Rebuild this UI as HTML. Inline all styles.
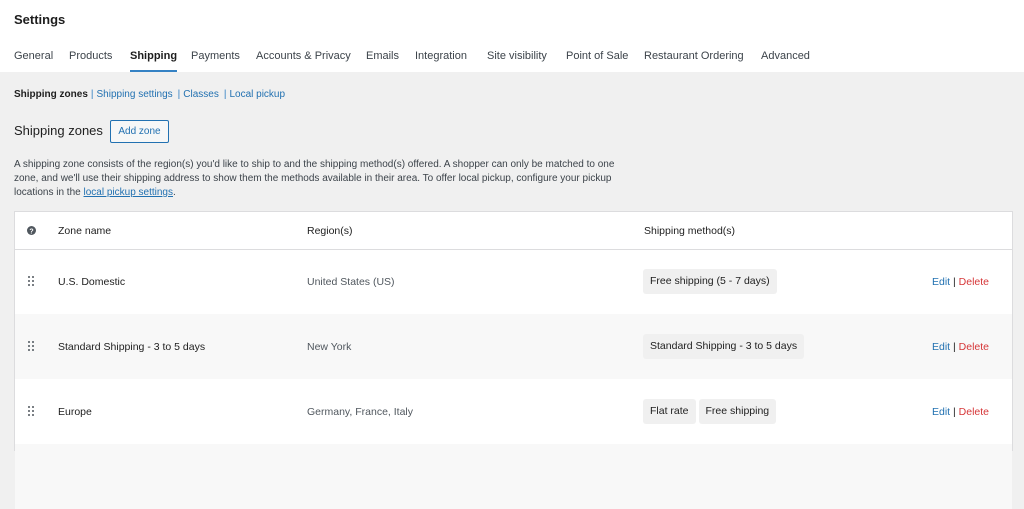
<!DOCTYPE html>
<html><head><style>
html,body{margin:0;width:1024px;height:448px;overflow:hidden}
body{background:#f0f0f0;font-family:"Liberation Sans",sans-serif;color:#1e1e1e;}
.hdr{background:#fff;height:72px;position:relative}
.title{position:absolute;left:14px;top:12px;font-size:13px;font-weight:bold;color:#1e1e1e}
.tabs{position:absolute;left:0;top:50px;font-size:11px;color:#3c434a;white-space:nowrap}
.tabs span{position:absolute;top:0}
.tabs .on{color:#1e1e1e;font-weight:bold}
.tabs .on:after{content:"";position:absolute;left:0;right:0;top:20px;height:2px;background:#3582c4}
.sub{position:absolute;left:14px;top:89px;font-size:10px;color:#2271b1;white-space:nowrap}
.sub b{color:#1e1e1e}
.sub i{font-style:normal;color:#3582c4;margin:0 3px}
h2{position:absolute;left:14px;top:123px;margin:0;font-size:13px;font-weight:normal;color:#1e1e1e}
.btn{position:absolute;left:110px;top:120px;width:57px;height:21px;border:1px solid #2271b1;border-radius:2px;background:#f6f7f7;color:#2271b1;font-size:10px;line-height:21px;text-align:center}
.desc{position:absolute;left:14px;top:158px;font-size:10px;line-height:14px;color:#3c434a;width:615px}
.desc a{color:#2271b1;text-decoration:underline}
.tbl{position:absolute;left:14px;top:211px;width:999px;height:240px;background:#fff;border:1px solid #dcdcde;box-sizing:border-box}
.th{position:absolute;top:0;left:0;right:0;height:37px;border-bottom:1px solid #dcdcde;font-size:10.5px;color:#1e1e1e}
.row{position:absolute;left:0;right:0;height:65px;font-size:10.5px}
.row.g{background:#f8f8f8}
.c{position:absolute;white-space:nowrap}
.pill{display:inline-block;background:#f0f0f0;border-radius:3px;padding:0 7px;height:25px;line-height:25px;margin-right:3px;color:#1e1e1e}
.reg{color:#50575e}
.act{color:#2271b1}.act em{font-style:normal;color:#d63638}
.drag{position:absolute;left:13px;width:7px;height:11px}
</style></head><body>
<div class="hdr">
<div class="title">Settings</div>
<div class="tabs"><span style="left:14px">General</span><span style="left:69px">Products</span><span class="on" style="left:130px">Shipping</span><span style="left:191px">Payments</span><span style="left:256px">Accounts &amp; Privacy</span><span style="left:366px">Emails</span><span style="left:415px">Integration</span><span style="left:487px">Site visibility</span><span style="left:566px">Point of Sale</span><span style="left:644px">Restaurant Ordering</span><span style="left:761px">Advanced</span></div>
</div>
<div class="sub"><b>Shipping zones</b><i>|</i>Shipping settings<i style="margin-left:5px">|</i>Classes<i style="margin-left:5px">|</i>Local pickup</div>
<h2>Shipping zones</h2>
<div class="btn">Add zone</div>
<div class="desc">A shipping zone consists of the region(s) you'd like to ship to and the shipping method(s) offered. A shopper can only be matched to one zone, and we'll use their shipping address to show them the methods available in their area. To offer local pickup, configure your pickup locations in the <a>local pickup settings</a>.</div>
<div class="tbl">
<div class="th">
<svg class="c" style="left:12px;top:14px" width="9" height="9"><circle cx="4.5" cy="4.5" r="4.5" fill="#50575e"/><text x="4.5" y="7.5" font-size="7" fill="#fff" text-anchor="middle" font-family="Liberation Sans" font-weight="bold">?</text></svg>
<div class="c" style="left:43px;top:13px">Zone name</div>
<div class="c" style="left:292px;top:13px">Region(s)</div>
<div class="c" style="left:629px;top:13px">Shipping method(s)</div>
</div>
<div class="row" style="top:37px">
<svg class="drag" style="top:27px"><g fill="#50575e"><circle cx="1" cy="1" r="1"/><circle cx="5" cy="1" r="1"/><circle cx="1" cy="5" r="1"/><circle cx="5" cy="5" r="1"/><circle cx="1" cy="9" r="1"/><circle cx="5" cy="9" r="1"/></g></svg>
<div class="c" style="left:43px;top:27px">U.S. Domestic</div>
<div class="c reg" style="left:292px;top:27px">United States (US)</div>
<div class="c" style="left:628px;top:20px"><span class="pill">Free shipping (5 - 7 days)</span></div>
<div class="c act" style="left:917px;top:27px">Edit <span style="color:#1e1e1e">|</span> <em>Delete</em></div>
</div>
<div class="row g" style="top:102px">
<svg class="drag" style="top:27px"><g fill="#50575e"><circle cx="1" cy="1" r="1"/><circle cx="5" cy="1" r="1"/><circle cx="1" cy="5" r="1"/><circle cx="5" cy="5" r="1"/><circle cx="1" cy="9" r="1"/><circle cx="5" cy="9" r="1"/></g></svg>
<div class="c" style="left:43px;top:27px">Standard Shipping - 3 to 5 days</div>
<div class="c reg" style="left:292px;top:27px">New York</div>
<div class="c" style="left:628px;top:20px"><span class="pill">Standard Shipping - 3 to 5 days</span></div>
<div class="c act" style="left:917px;top:27px">Edit <span style="color:#1e1e1e">|</span> <em>Delete</em></div>
</div>
<div class="row" style="top:167px">
<svg class="drag" style="top:27px"><g fill="#50575e"><circle cx="1" cy="1" r="1"/><circle cx="5" cy="1" r="1"/><circle cx="1" cy="5" r="1"/><circle cx="5" cy="5" r="1"/><circle cx="1" cy="9" r="1"/><circle cx="5" cy="9" r="1"/></g></svg>
<div class="c" style="left:43px;top:27px">Europe</div>
<div class="c reg" style="left:292px;top:27px">Germany, France, Italy</div>
<div class="c" style="left:628px;top:20px"><span class="pill">Flat rate</span><span class="pill">Free shipping</span></div>
<div class="c act" style="left:917px;top:27px">Edit <span style="color:#1e1e1e">|</span> <em>Delete</em></div>
</div>
<div class="row g" style="top:232px"></div>
</div>
</body></html>
